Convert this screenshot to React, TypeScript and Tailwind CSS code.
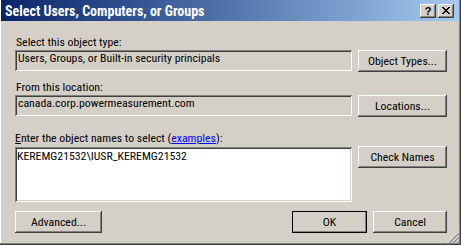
import React from "react";

const raised =
  "shadow-[inset_-1px_-1px_#404040,inset_1px_1px_#ffffff,inset_-2px_-2px_#808080,inset_2px_2px_#d4d0c8]";
const sunken =
  "shadow-[inset_1px_1px_#808080,inset_-1px_-1px_#ffffff,inset_2px_2px_#404040,inset_-2px_-2px_#d4d0c8]";

const font = "font-['Roboto_Condensed','Liberation_Sans',Arial,sans-serif]";

function Btn({ children, className = "" }: { children: React.ReactNode; className?: string }) {
  return (
    <div
      className={`flex h-[22px] items-center justify-center bg-[#d4d0c8] text-[11.8px] leading-[14px] text-black ${raised} ${className}`}
    >
      {children}
    </div>
  );
}

function Grip() {
  const lines: React.ReactNode[] = [];
  [0, 4, 8].forEach((i) => {
    lines.push(<line key={`w${i}`} x1={i + 0.5} y1={12} x2={12} y2={i + 0.5} stroke="#ffffff" strokeWidth={1} />);
    lines.push(<line key={`g${i}`} x1={i + 1.5} y1={12} x2={12} y2={i + 1.5} stroke="#808080" strokeWidth={1} />);
    lines.push(<line key={`h${i}`} x1={i + 2.5} y1={12} x2={12} y2={i + 2.5} stroke="#808080" strokeWidth={1} />);
  });
  return (
    <svg width="12" height="12" viewBox="0 0 12 12" className="absolute bottom-[2px] right-[2px]">
      {lines}
    </svg>
  );
}

export default function App() {
  return (
    <div
      className={`relative flex h-[245px] w-[461px] flex-col overflow-hidden bg-[#d4d0c8] ${font} shadow-[inset_-1px_-1px_#404040,inset_-2px_-2px_#808080,inset_1px_0_#ffffff]`}
    >
      {/* Title bar */}
      <div className="ml-[1px] mr-[2px] flex h-[21px] shrink-0 items-center bg-gradient-to-r from-[#0a246a] to-[#a6caf0] pl-[4px] pr-[5px]">
        <span className="flex-1 text-[14px] font-bold leading-[14px] text-white">
          Select Users, Computers, or Groups
        </span>
        <div className={`flex h-[14px] w-[16px] items-center justify-center bg-[#d4d0c8] ${raised}`}>
          <span className="mt-[1px] font-['Liberation_Sans',Arial,sans-serif] text-[11px] font-bold leading-[11px] text-black">
            ?
          </span>
        </div>
        <div className={`ml-[2px] flex h-[14px] w-[16px] items-center justify-center bg-[#d4d0c8] ${raised}`}>
          <svg width="8" height="7" viewBox="0 0 8 7" shapeRendering="crispEdges">
            <path
              d="M0 0h2v1H0zM6 0h2v1H6zM1 1h2v1H1zM5 1h2v1H5zM2 2h4v1H2zM3 3h2v1H3zM2 4h4v1H2zM1 5h2v1H1zM5 5h2v1H5zM0 6h2v1H0zM6 6h2v1H6z"
              fill="#000"
            />
          </svg>
        </div>
      </div>

      <div className="flex flex-col pl-[15px] pr-[14px] text-[11.8px] leading-[14px] text-black">
        <div className="mt-[14px] h-[14px] pl-[1px]">Select this object type:</div>
        <div className="mt-[1px] flex gap-[6px]">
          <div className={`h-[21px] flex-1 bg-[#d4d0c8] pl-[3px] pt-[1px] ${sunken}`}>
            Users, Groups, or Built-in security principals
          </div>
          <Btn className="w-[89px]">Object Types...</Btn>
        </div>

        <div className="mt-[8px] h-[14px] pl-[1px]">From this location:</div>
        <div className="mt-[1px] flex gap-[6px]">
          <div className={`h-[21px] flex-1 bg-[#d4d0c8] pl-[3px] pt-[1px] ${sunken}`}>
            canada.corp.powermeasurement.com
          </div>
          <Btn className="w-[89px]">Locations...</Btn>
        </div>

        <div className="mt-[14px] h-[14px]">
          <span className="underline">E</span>nter the object names to select (
          <span className="text-[#0000ff] underline">examples</span>):
        </div>
        <div className="mt-[1px] flex items-start gap-[6px]">
          <div className={`mt-[1px] h-[55px] flex-1 bg-white pl-[2px] pt-[2px] ${sunken}`}>
            KEREMG21532\IUSR_KEREMG21532
          </div>
          <Btn className="w-[89px]">Check Names</Btn>
        </div>

        <div className="mt-[9px] flex">
          <Btn className="w-[87px]">Advanced...</Btn>
          <div className="flex-1" />
          <Btn className="w-[75px] outline outline-1 outline-black -outline-offset-1">OK</Btn>
          <Btn className="ml-[6px] w-[74px]">Cancel</Btn>
        </div>
      </div>
      <Grip />
    </div>
  );
}
